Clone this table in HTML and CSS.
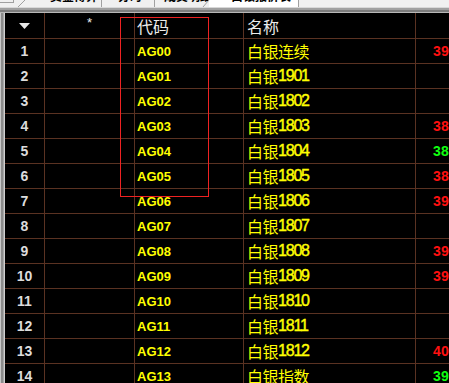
FILE: index.html
```html
<!DOCTYPE html>
<html lang="zh">
<head>
<meta charset="utf-8">
<title>白银报价</title>
<link rel="stylesheet" href="styles.css">
</head>
<body>
<div class="app">
  <div class="tabbar">
    <div class="tab t0"></div>
    <div class="tab t1"><span>资金博弈</span></div>
    <div class="tab t2"><span>分时</span></div>
    <div class="tab t3"><span>成交明细</span></div>
    <div class="tab t4 active"><span>白银报价表</span></div>
    <svg class="tabdiag" width="449" height="7" viewBox="0 0 449 7">
      <line x1="18" y1="7" x2="25" y2="0" stroke="#a0a0a0" stroke-width="1"/>
      <line x1="203" y1="7" x2="209" y2="0" stroke="#a0a0a0" stroke-width="1"/>
    </svg>
  </div>
  <div class="band"></div>
  <div class="main">
    <div class="edge"></div>
    <div class="grid">
      <div class="c hc idx"><svg width="11" height="6" viewBox="0 0 11 6"><polygon points="0,0 11,0 5.5,6" fill="#e8e8e8"/></svg></div>
      <div class="c hc star">*</div>
      <div class="c hc code">代码</div>
      <div class="c hc name">名称</div>
      <div class="c hc val"></div>

      <div class="c idx">1</div><div class="c"></div><div class="c code">AG00</div><div class="c name">白银连续</div><div class="c val up">3921</div>
      <div class="c idx">2</div><div class="c"></div><div class="c code">AG01</div><div class="c name">白银<span class="n">1901</span></div><div class="c val"></div>
      <div class="c idx">3</div><div class="c"></div><div class="c code">AG02</div><div class="c name">白银<span class="n">1802</span></div><div class="c val"></div>
      <div class="c idx">4</div><div class="c"></div><div class="c code">AG03</div><div class="c name">白银<span class="n">1803</span></div><div class="c val up">3852</div>
      <div class="c idx">5</div><div class="c"></div><div class="c code">AG04</div><div class="c name">白银<span class="n">1804</span></div><div class="c val down">3861</div>
      <div class="c idx">6</div><div class="c"></div><div class="c code">AG05</div><div class="c name">白银<span class="n">1805</span></div><div class="c val up">3874</div>
      <div class="c idx">7</div><div class="c"></div><div class="c code">AG06</div><div class="c name">白银<span class="n">1806</span></div><div class="c val up">3902</div>
      <div class="c idx">8</div><div class="c"></div><div class="c code">AG07</div><div class="c name">白银<span class="n">1807</span></div><div class="c val"></div>
      <div class="c idx">9</div><div class="c"></div><div class="c code">AG08</div><div class="c name">白银<span class="n">1808</span></div><div class="c val up">3925</div>
      <div class="c idx">10</div><div class="c"></div><div class="c code">AG09</div><div class="c name">白银<span class="n">1809</span></div><div class="c val up">3948</div>
      <div class="c idx">11</div><div class="c"></div><div class="c code">AG10</div><div class="c name">白银<span class="n">1810</span></div><div class="c val"></div>
      <div class="c idx">12</div><div class="c"></div><div class="c code">AG11</div><div class="c name">白银<span class="n">1811</span></div><div class="c val"></div>
      <div class="c idx">13</div><div class="c"></div><div class="c code">AG12</div><div class="c name">白银<span class="n">1812</span></div><div class="c val up">4010</div>
      <div class="c idx">14</div><div class="c"></div><div class="c code">AG13</div><div class="c name">白银指数</div><div class="c val down">3936</div>
    </div>
  </div>
  <div class="redbox"></div>
</div>
</body>
</html>
```

FILE: styles.css
```css
html, body {
  margin: 0;
  padding: 0;
  width: 449px;
  height: 383px;
  overflow: hidden;
  background: #000;
}

.app {
  position: relative;
  width: 449px;
  height: 383px;
  overflow: hidden;
  display: flex;
  flex-direction: column;
  font-family: "Liberation Sans", "Noto Sans CJK SC", sans-serif;
}

.tabbar {
  position: relative;
  height: 7px;
  flex: none;
  display: flex;
  background: #f0f0f0;
  overflow: hidden;
}

.tab {
  box-sizing: border-box;
  height: 7px;
  overflow: hidden;
  font-family: "Noto Sans CJK SC", sans-serif;
  font-size: 12px;
  font-weight: bold;
  color: #000;
  display: flex;
  align-items: flex-end;
}

.tab span {
  display: block;
  line-height: 12px;
  margin-bottom: 5px;
  white-space: nowrap;
}

.t0 {
  width: 14px;
  height: 3px;
  border-right: 1px solid #a0a0a0;
  border-bottom: 1px solid #a0a0a0;
}

.t1 {
  width: 88px;
  padding-left: 36px;
  border-right: 1px solid #a0a0a0;
}

.t2 {
  width: 53px;
  padding-left: 16px;
  border-right: 1px solid #a0a0a0;
}

.t3 {
  width: 54px;
  padding-left: 9px;
}

.t4 {
  width: 90px;
  padding-left: 22px;
  background: #fff;
  border-right: 1px solid #a0a0a0;
}

.tabdiag {
  position: absolute;
  left: 0;
  top: 0;
}

.band {
  height: 6px;
  flex: none;
  background: linear-gradient(to bottom, #d8d8d8 0, #d8d8d8 1px, #a0a0a0 1px, #a0a0a0 3px, #7c7c7c 3px, #7c7c7c 5px, #b8b8b8 5px);
}

.main {
  flex: 1;
  display: flex;
  background: #000;
  overflow: hidden;
}

.edge {
  width: 5px;
  flex: none;
  background: linear-gradient(to right, #c8c8c8 0, #c8c8c8 1px, #8c8c8c 1px, #8c8c8c 3px, #a8a8a8 3px, #a8a8a8 4px, #d0d0d0 4px);
}

.grid {
  display: grid;
  grid-template-columns: 40px 90px 109px 172px 200px;
  grid-template-rows: 26px;
  grid-auto-rows: 25px;
  background: #000;
  flex: none;
}

.c {
  box-sizing: border-box;
  border-right: 1px solid #5a3222;
  border-bottom: 1px solid #5a3222;
  display: flex;
  align-items: center;
  white-space: nowrap;
  overflow: hidden;
}

.hc {
  color: #ececec;
  font-family: "Noto Sans CJK SC", sans-serif;
  font-size: 16px;
}

.idx {
  justify-content: center;
  color: #dcdcdc;
  font-weight: bold;
  font-size: 14px;
}

.star {
  justify-content: center;
  font-family: "Liberation Sans", sans-serif;
  font-size: 13px;
  padding-bottom: 6px;
}

.code {
  padding-left: 2px;
  color: #ffff00;
  font-weight: bold;
  font-size: 13px;
}

.hc.code {
  color: #ececec;
  font-weight: normal;
  font-size: 16px;
}

.name {
  padding-left: 3px;
  color: #ffff00;
  font-family: "Noto Sans CJK SC", sans-serif;
  font-size: 16px;
  letter-spacing: -0.5px;
}

.hc.name {
  color: #ececec;
  letter-spacing: 0;
}

.n {
  font-family: "Liberation Sans", sans-serif;
  font-weight: normal;
  font-size: 16px;
  letter-spacing: -1.2px;
  -webkit-text-stroke: 0.4px #ffff00;
}

.val {
  padding-left: 17px;
  font-weight: bold;
  font-size: 14px;
  letter-spacing: 0.3px;
}

.up {
  color: #ff1010;
}

.down {
  color: #10ff10;
}

.redbox {
  position: absolute;
  left: 120px;
  top: 17px;
  width: 89px;
  height: 180px;
  box-sizing: border-box;
  border: 1px solid #ee2222;
}
```
